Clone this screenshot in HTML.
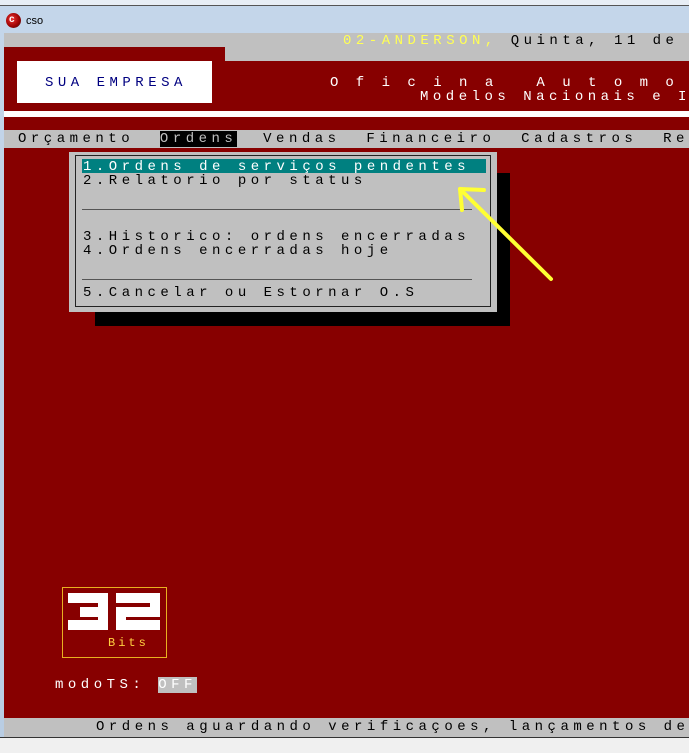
<!DOCTYPE html>
<html><head><meta charset="utf-8"><style>
*{margin:0;padding:0;box-sizing:border-box}
body{width:689px;height:753px;overflow:hidden;position:relative;background:#f0f0f0;font-family:"Liberation Mono",monospace}
.a{position:absolute}
.t{position:absolute;font-size:14px;letter-spacing:4.5px;white-space:pre;line-height:14px}
</style></head><body>
<div class="a" style="left:0;top:0;width:689px;height:6px;background:#e8eef5;border-bottom:1px solid #555"></div>
<div class="a" style="left:0;top:6px;width:689px;height:732px;background:linear-gradient(#c4d6ea,#b9cde3)"></div>
<div class="a" style="left:6px;top:13px;width:15px;height:15px;border-radius:50%;background:radial-gradient(circle at 40% 40%,#e33,#900 60%,#222)"></div>
<div class="a" style="left:9px;top:14px;color:#fff;font:bold 10px 'Liberation Sans',sans-serif">c</div>
<div class="a" style="left:26px;top:15px;font:11px 'Liberation Sans',sans-serif;color:#000">cso</div>
<div class="a" style="left:4px;top:33px;width:685px;height:705px;background:#c0c0c0"></div>
<div class="a" style="left:4px;top:47px;width:221px;height:14px;background:#870000"></div>
<div class="a" style="left:4px;top:61px;width:685px;height:50px;background:#870000"></div>
<div class="a" style="left:4px;top:111px;width:685px;height:6px;background:#fff"></div>
<div class="a" style="left:4px;top:117px;width:685px;height:13px;background:#870000"></div>
<div class="a" style="left:4px;top:148px;width:685px;height:570px;background:#870000"></div>
<div class="t" style="left:343px;top:34px"><span style="color:#ffff55">02-ANDERSON,</span> Quinta, 11 de</div>
<div class="a" style="left:17px;top:61px;width:195px;height:42px;background:#fff"></div>
<div class="t" style="left:45px;top:76px;color:#000080">SUA EMPRESA</div>
<div class="t" style="left:330px;top:76px;color:#fff">O f i c i n a   A u t o m o</div>
<div class="t" style="left:420px;top:90px;color:#fff">Modelos Nacionais e I</div>
<div class="t" style="left:18px;top:132px;color:#000">Orçamento  <span style="background:#000;color:#c0c0c0">Ordens</span>  Vendas  Financeiro  Cadastros  Re</div>
<div class="a" style="left:95px;top:173px;width:415px;height:153px;background:#000"></div>
<div class="a" style="left:69px;top:152px;width:428px;height:160px;background:#c0c0c0"></div>
<div class="a" style="left:75px;top:155px;width:416px;height:152px;border:1px solid #222"></div>
<div class="a" style="left:82px;top:159px;width:404px;height:14px;background:#008080"></div>
<div class="t" style="left:83px;top:160px;color:#fff">1.Ordens de serviços pendentes</div>
<div class="t" style="left:83px;top:174px;color:#000">2.Relatorio por status</div>
<div class="a" style="left:82px;top:209px;width:390px;height:1px;background:#555"></div>
<div class="t" style="left:83px;top:230px;color:#000">3.Historico: ordens encerradas</div>
<div class="t" style="left:83px;top:244px;color:#000">4.Ordens encerradas hoje</div>
<div class="a" style="left:82px;top:279px;width:390px;height:1px;background:#555"></div>
<div class="t" style="left:83px;top:286px;color:#000">5.Cancelar ou Estornar O.S</div>
<svg class="a" style="left:0;top:0" width="689" height="753"><g stroke="#ffff33" stroke-width="4" stroke-linecap="round" fill="none"><line x1="551" y1="279" x2="460" y2="189"/><line x1="460" y1="189" x2="484" y2="190"/><line x1="460" y1="189" x2="462" y2="210"/></g>
<g fill="#fff"><rect x="68" y="593" width="40" height="10"/><rect x="80" y="607" width="28" height="10"/><rect x="68" y="620" width="40" height="10"/><rect x="98" y="593" width="10" height="37"/>
<rect x="116" y="593" width="44" height="10"/><rect x="150" y="593" width="10" height="20"/><rect x="116" y="607" width="44" height="10"/><rect x="116" y="607" width="10" height="23"/><rect x="116" y="620" width="44" height="10"/></g></svg>
<div class="a" style="left:62px;top:587px;width:105px;height:71px;border:1px solid #e8b020"></div>
<div class="t" style="left:108px;top:636px;color:#ffd040;font-size:12px;letter-spacing:3px">Bits</div>
<div class="t" style="left:55px;top:678px;color:#fff">modoTS: <span style="background:#c0c0c0;color:#fff">OFF</span></div>
<div class="t" style="left:96px;top:720px;color:#000">Ordens aguardando verificaçoes, lançamentos de</div>
<div class="a" style="left:0;top:737px;width:689px;height:1px;background:#333"></div>
<div class="a" style="left:0;top:738px;width:689px;height:15px;background:#f0f0f0"></div>
</body></html>
